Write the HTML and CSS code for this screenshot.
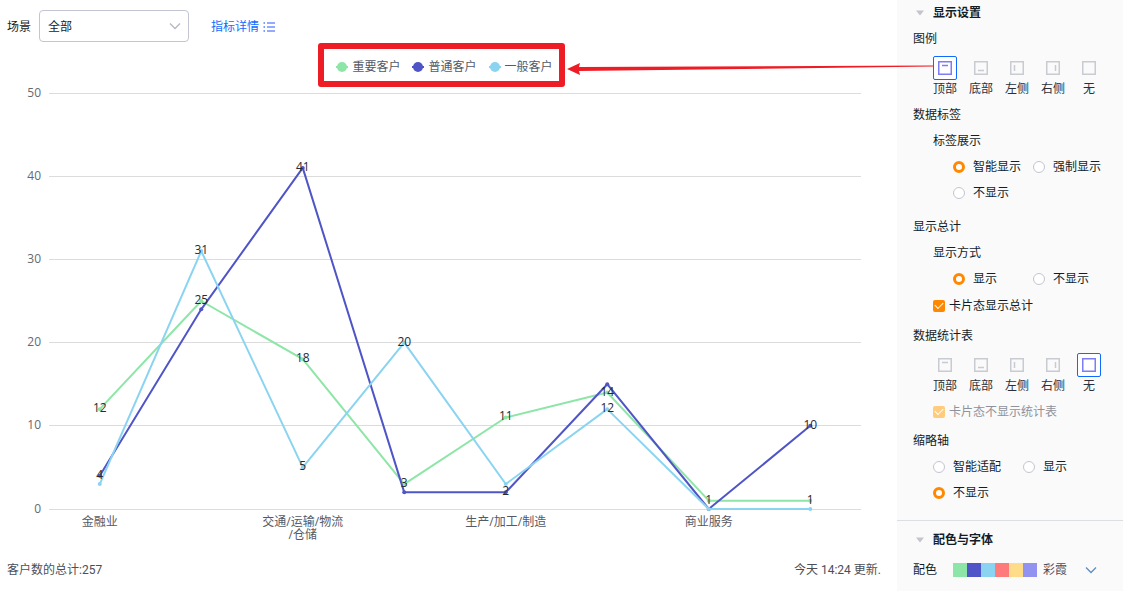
FILE: index.html
```html
<!DOCTYPE html>
<html lang="zh-CN">
<head>
    <meta charset="UTF-8">
    <meta name="viewport" content="width=device-width, initial-scale=1.0">
    <title>客户数</title>
    <link rel="stylesheet" href="styles.css">
</head>
<body>

    <!-- 图标 -->
    <svg class="sprite" aria-hidden="true">
        <symbol id="chevron" viewBox="0 0 12 8"><path d="M1 1.5l5 5 5-5" fill="none" stroke="currentColor" stroke-width="1.3"/></symbol>
        <symbol id="caret" viewBox="0 0 8 6"><path d="M0 0.5h8L4 5.5z" fill="currentColor"/></symbol>
        <symbol id="pos-top" viewBox="0 0 14 14"><rect x="0.75" y="0.75" width="12.5" height="12.5"/><path d="M4 4.5h6"/></symbol>
        <symbol id="pos-bottom" viewBox="0 0 14 14"><rect x="0.75" y="0.75" width="12.5" height="12.5"/><path d="M4 9.5h6"/></symbol>
        <symbol id="pos-left" viewBox="0 0 14 14"><rect x="0.75" y="0.75" width="12.5" height="12.5"/><path d="M4.500 4v6"/></symbol>
        <symbol id="pos-right" viewBox="0 0 14 14"><rect x="0.75" y="0.75" width="12.5" height="12.5"/><path d="M9.500 4v6"/></symbol>
        <symbol id="pos-none" viewBox="0 0 14 14"><rect x="0.75" y="0.75" width="12.5" height="12.5"/></symbol>
    </svg>

    <main class="main">
        <div class="toolbar">
            <label for="scene">场景</label>
            <div class="select-box">
                <select id="scene">
                    <option>全部</option>
                </select>
                <svg class="chevron"><use href="#chevron"/></svg>
            </div>
            <a class="detail-link" href="#detail">指标详情
                <svg width="12" height="10" viewBox="0 0 12 10">
                    <path d="M0.500 1h1.500M0.500 5h1.500M0.500 9h1.500" stroke="#4f7dff" stroke-width="1.3"/>
                    <path d="M4 1h8M4 5h8M4 9h8" stroke="#6f8fff" stroke-width="1.3"/>
                </svg>
            </a>
        </div>

        <div class="chart">
            <div class="legend">
                <span class="legend-item green"><svg viewBox="0 0 12 10"><path d="M0 5h12"/><circle cx="6" cy="5" r="5"/></svg>重要客户</span>
                <span class="legend-item purple"><svg viewBox="0 0 12 10"><path d="M0 5h12"/><circle cx="6" cy="5" r="5"/></svg>普通客户</span>
                <span class="legend-item blue"><svg viewBox="0 0 12 10"><path d="M0 5h12"/><circle cx="6" cy="5" r="5"/></svg>一般客户</span>
            </div>
            <svg class="plot" id="plot" viewBox="0 0 883 461" role="img" aria-label="客户数折线图"></svg>
        </div>

        <div class="footer">
            <span>客户数的总计:257</span>
            <span>今天 14:24 更新.</span>
        </div>

        <svg class="arrow" width="366" height="16" viewBox="0 0 366 16" aria-hidden="true">
            <path d="M0 9L13 3 12 7 366 5.500V6.500L12 11 13 15z"/>
        </svg>
    </main>

    <aside class="panel">
        <section class="display">
            <h2><svg class="caret"><use href="#caret"/></svg>显示设置</h2>

            <h3>图例</h3>
            <div class="positions">
                <button type="button" class="active"><i><svg><use href="#pos-top"/></svg></i>顶部</button>
                <button type="button"><i><svg><use href="#pos-bottom"/></svg></i>底部</button>
                <button type="button"><i><svg><use href="#pos-left"/></svg></i>左侧</button>
                <button type="button"><i><svg><use href="#pos-right"/></svg></i>右侧</button>
                <button type="button"><i><svg><use href="#pos-none"/></svg></i>无</button>
            </div>

            <h3>数据标签</h3>
            <h4>标签展示</h4>
            <div class="radios indent">
                <label><input type="radio" name="tag" checked>智能显示</label>
                <label><input type="radio" name="tag">强制显示</label>
                <label><input type="radio" name="tag">不显示</label>
            </div>

            <h3 class="spaced">显示总计</h3>
            <h4>显示方式</h4>
            <div class="radios indent">
                <label><input type="radio" name="total" checked>显示</label>
                <label><input type="radio" name="total">不显示</label>
            </div>
            <label class="check"><input type="checkbox" checked>卡片态显示总计</label>

            <h3 class="spaced-sm">数据统计表</h3>
            <div class="positions">
                <button type="button"><i><svg><use href="#pos-top"/></svg></i>顶部</button>
                <button type="button"><i><svg><use href="#pos-bottom"/></svg></i>底部</button>
                <button type="button"><i><svg><use href="#pos-left"/></svg></i>左侧</button>
                <button type="button"><i><svg><use href="#pos-right"/></svg></i>右侧</button>
                <button type="button" class="active"><i><svg><use href="#pos-none"/></svg></i>无</button>
            </div>
            <label class="check disabled"><input type="checkbox" checked disabled>卡片态不显示统计表</label>

            <h3 class="spaced-sm">缩略轴</h3>
            <div class="radios">
                <label><input type="radio" name="zoom">智能适配</label>
                <label><input type="radio" name="zoom">显示</label>
                <label><input type="radio" name="zoom" checked>不显示</label>
            </div>
        </section>

        <section class="colors">
            <h2><svg class="caret"><use href="#caret"/></svg>配色与字体</h2>
            <div class="color-row">
                <span id="palette-label">配色</span>
                <button type="button" class="palette" aria-labelledby="palette-label palette-name">
                    <span class="swatches"><b></b><b></b><b></b><b></b><b></b><b></b></span>
                    <span id="palette-name">彩霞</span>
                    <svg class="chevron"><use href="#chevron"/></svg>
                </button>
            </div>
        </section>
    </aside>

    <script>
        const categories = [['金融业'], [], ['交通/运输/物流', '/仓储'], [], ['生产/加工/制造'], [], ['商业服务'], []];
        const series = [
            { cls: 'green', data: [12, 25, 18, 3, 11, 14, 1, 1], hidden: [] },
            { cls: 'purple', data: [4, 24, 41, 2, 2, 15, 0, 10], hidden: [1, 3, 5, 6] },
            { cls: 'blue', data: [3, 31, 5, 20, 3, 12, 0, 0], hidden: [0, 4, 6, 7] }
        ];

        const left = 49, right = 861, bottom = 422, top50 = 6;
        const step = (right - left) / categories.length;
        const x = i => left + step * (i + 0.5);
        const y = v => bottom - v * (bottom - top50) / 50;

        let out = '';

        // 网格线和刻度
        for (let v = 0; v <= 50; v += 10) {
            const gy = Math.floor(y(v)) + 0.5;
            out += `<line class="grid" x1="${left}" y1="${gy}" x2="${right}" y2="${gy}"/>`;
            out += `<text class="tick" x="41" y="${Math.floor(y(v)) + 4}">${v}</text>`;
        }

        categories.forEach((lines, i) => {
            lines.forEach((t, n) => {
                out += `<text class="category" x="${x(i)}" y="${bottom + 17 + n * 13}">${t}</text>`;
            });
        });

        // 折线
        series.forEach(s => {
            const points = s.data.map((v, i) => `${x(i)},${y(v)}`).join(' ');
            out += `<g class="series ${s.cls}"><polyline points="${points}"/>`;
            s.data.forEach((v, i) => out += `<circle cx="${x(i)}" cy="${y(v)}" r="2"/>`);
            out += '</g>';
        });

        // 数据标签
        series.forEach(s => {
            s.data.forEach((v, i) => {
                if (!s.hidden.includes(i)) {
                    out += `<text class="value" x="${x(i)}" y="${y(v) + 3}">${v}</text>`;
                }
            });
        });

        document.getElementById('plot').innerHTML = out;
    </script>

</body>
</html>
```
FILE: styles.css
```css
* {
    box-sizing: border-box;
}
body {
    margin: 0;
    min-height: 100vh;
    display: flex;
    background: #fff;
    color: #141c28;
    font-family: Roboto, "Noto Sans CJK SC", sans-serif;
    font-size: 12px;
    line-height: 16px;
}
select, button, input {
    font: inherit;
    color: inherit;
    margin: 0;
}
.sprite {
    position: absolute;
    width: 0;
    height: 0;
}

/* 左侧图表区 */
.main {
    position: relative;
    flex: 1;
    min-width: 0;
}
.toolbar {
    display: flex;
    align-items: center;
    gap: 8px;
    padding: 10px 7px 1px;
}
.toolbar label, .detail-link {
    padding-top: 2px;
}
.select-box {
    display: grid;
    align-items: center;
    width: 150px;
}
.select-box > * {
    grid-area: 1 / 1;
}
.select-box select {
    appearance: none;
    width: 100%;
    height: 32px;
    padding: 2px 8px 0;
    background: #fff;
    border: 1px solid #c3c5d2;
    border-radius: 4px;
}
.select-box .chevron {
    justify-self: end;
    margin-right: 8px;
    pointer-events: none;
}
.chevron {
    width: 12px;
    height: 8px;
    color: #b4b8c4;
}
.detail-link {
    display: flex;
    align-items: center;
    gap: 4px;
    margin-left: 14px;
    color: #0f6bff;
    text-decoration: none;
}

.chart {
    display: flex;
    flex-direction: column;
    align-items: center;
    padding-right: 14px;
}
.legend {
    display: flex;
    align-items: center;
    gap: 12px;
    height: 44px;
    padding: 4px 6px 0 12px;
    border: 6px solid #ee1c25;
    border-radius: 3px;
    color: #555a66;
}
.legend-item {
    display: flex;
    align-items: center;
    gap: 4px;
}
.legend-item svg {
    width: 12px;
    height: 10px;
    stroke-width: 2px;
}
.legend-item circle {
    stroke: none;
}
.green { fill: #8de6a7; stroke: #8de6a7; }
.purple { fill: #4f55c6; stroke: #4f55c6; }
.blue { fill: #8ad4f1; stroke: #8ad4f1; }

.plot {
    display: block;
    width: 100%;
    overflow: visible;
    font-family: "Open Sans", "Noto Sans CJK SC", sans-serif;
}
.grid {
    stroke: #dcdcdc;
}
.tick {
    fill: #646a73;
    text-anchor: end;
}
.category {
    fill: #555a66;
    text-anchor: middle;
}
.value {
    fill: #262a33;
    text-anchor: middle;
}
.series polyline {
    fill: none;
    stroke-width: 2px;
    stroke-linejoin: round;
}
.series circle {
    stroke: none;
}

.footer {
    display: flex;
    justify-content: space-between;
    padding: 14px 16px 14px 7px;
    color: #4a4f5a;
}
.arrow {
    position: absolute;
    top: 60px;
    right: -36px;
    fill: #ee1c25;
    pointer-events: none;
}

/* 右侧设置面板 */
.panel {
    width: 226px;
    background: #fafafa;
}
.panel h2, .panel h3, .panel h4 {
    margin: 0;
    font-size: 12px;
    line-height: 26px;
    font-weight: normal;
}
.panel h2 {
    display: flex;
    align-items: center;
    gap: 9px;
    padding-left: 19px;
    font-weight: bold;
}
.panel h3 {
    padding-left: 16px;
}
.panel h4 {
    padding-left: 36px;
}
.panel .spaced {
    margin-top: 8px;
}
.panel .spaced-sm {
    margin-top: 3px;
}
.display {
    padding-bottom: 14px;
}
.caret {
    width: 8px;
    height: 6px;
    color: #c3c5cc;
}
.positions {
    display: flex;
    gap: 12px;
    padding: 4px 0 5px 36px;
}
.positions button {
    width: 24px;
    padding: 0;
    border: 0;
    background: none;
    color: #2b303b;
    white-space: nowrap;
    cursor: pointer;
}
.positions i {
    display: flex;
    align-items: center;
    justify-content: center;
    height: 24px;
    margin-bottom: 1px;
    border: 1px solid transparent;
    border-radius: 2px;
}
.positions svg {
    width: 14px;
    height: 14px;
    fill: none;
    stroke: #c9cbd3;
    stroke-width: 1.5px;
}
.positions .active i {
    border-color: #0f6bff;
    background: #fff;
}
.positions .active svg {
    stroke: #7d7df5;
}
.radios {
    display: grid;
    grid-template-columns: 90px 1fr;
    padding-left: 36px;
}
.radios.indent {
    grid-template-columns: 80px 1fr;
    padding-left: 56px;
}
.radios label {
    display: flex;
    align-items: center;
    gap: 8px;
    height: 26px;
}
.radios input {
    appearance: none;
    width: 12px;
    height: 12px;
    border: 1px solid #c3c5d2;
    border-radius: 50%;
    background: #fff;
}
.radios input:checked {
    border: 3px solid #ff8800;
}
.check {
    display: flex;
    align-items: center;
    gap: 4px;
    height: 28px;
    padding-left: 36px;
}
.check input {
    appearance: none;
    display: flex;
    align-items: center;
    justify-content: center;
    width: 12px;
    height: 12px;
    border-radius: 2px;
    background: #ff8800;
}
.check input::before {
    content: "";
    width: 7px;
    height: 4px;
    margin-bottom: 3px;
    border: solid #fff;
    border-width: 0 0 1px 1px;
    transform: rotate(-45deg);
}
.check.disabled {
    height: 26px;
    color: #8f929b;
}
.check.disabled input {
    background: #ffcb7d;
}

.colors {
    padding-top: 6px;
    border-top: 1px solid #dcdee6;
}
.color-row {
    display: flex;
    align-items: center;
    gap: 16px;
    padding: 4px 0 0 16px;
}
.palette {
    display: flex;
    align-items: center;
    gap: 6px;
    height: 26px;
    padding: 0;
    border: 0;
    background: none;
    color: #4a4f5a;
}
.palette .chevron {
    margin-left: 12px;
    color: #5b8fc0;
}
.swatches {
    display: flex;
}
.swatches b {
    width: 14px;
    height: 14px;
    background: #8de6a7;
}
.swatches b:nth-child(2) { background: #4f55c6; }
.swatches b:nth-child(3) { background: #8ad4f1; }
.swatches b:nth-child(4) { background: #ff7b7b; }
.swatches b:nth-child(5) { background: #ffdc8a; }
.swatches b:nth-child(6) { background: #9292f0; }
```
